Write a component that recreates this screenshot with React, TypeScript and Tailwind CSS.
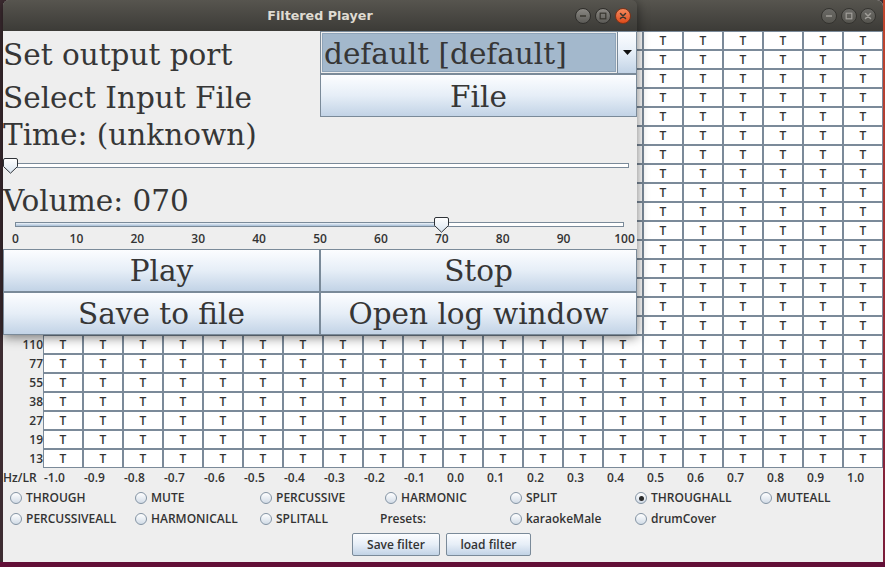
import React from 'react';

const SERIF = "font-['DejaVu_Serif',serif] text-[29.5px] leading-[34px] text-[#363636]";
const SANS = "font-['Open_Sans',sans-serif] font-semibold text-[12px] text-[#333333]";
const BTN = 'bg-linear-to-b from-[#fcfdff] via-[#e6eef7] to-[#c2d3e6] border border-[#7a8a99]';

// row labels of the filter grid, top to bottom
const HZ = [28160, 19912, 14080, 9956, 7040, 4978, 3520, 2489, 1760, 1244, 880, 622, 440, 311, 220, 155, 110, 77, 55, 38, 27, 19, 13];
const LR = Array.from({ length: 21 }, (_, i) => (i - 10) / 10);

// the player window covers the first 16 rows and 15 columns of the grid
const HIDDEN_ROWS = 16;
const HIDDEN_COLS = 15;

type Opt = { label: string; radio: boolean; checked?: boolean } | null;

const OPTIONS: Opt[][] = [
  [
    { label: 'THROUGH', radio: true },
    { label: 'MUTE', radio: true },
    { label: 'PERCUSSIVE', radio: true },
    { label: 'HARMONIC', radio: true },
    { label: 'SPLIT', radio: true },
    { label: 'THROUGHALL', radio: true, checked: true },
    { label: 'MUTEALL', radio: true },
  ],
  [
    { label: 'PERCUSSIVEALL', radio: true },
    { label: 'HARMONICALL', radio: true },
    { label: 'SPLITALL', radio: true },
    { label: 'Presets:', radio: false },
    { label: 'karaokeMale', radio: true },
    { label: 'drumCover', radio: true },
    null,
  ],
];

function WinButton({ kind, active }: { kind: 'min' | 'max' | 'close'; active: boolean }) {
  const face = active
    ? kind === 'close'
      ? 'bg-linear-to-b from-[#f6895c] to-[#dc4a17] border-[#7d3218]'
      : 'bg-linear-to-b from-[#8b8984] to-[#5b5a56] border-[#2f2e2b]'
    : 'bg-linear-to-b from-[#6b6a66] to-[#56554f] border-[#34332f]';
  const stroke = active ? '#38362f' : '#a09e99';
  return (
    <div className={`w-[16px] h-[16px] rounded-full border flex items-center justify-center ${face}`}>
      <svg width="8" height="8" viewBox="0 0 8 8">
        {kind === 'min' && <line x1="1" y1="4" x2="7" y2="4" stroke={stroke} strokeWidth="1.4" />}
        {kind === 'max' && <rect x="1.2" y="1.2" width="5.6" height="5.6" fill="none" stroke={stroke} strokeWidth="1.2" />}
        {kind === 'close' && (
          <path d="M1.5 1.5 L6.5 6.5 M6.5 1.5 L1.5 6.5" stroke={stroke} strokeWidth="1.5" strokeLinecap="round" />
        )}
      </svg>
    </div>
  );
}

function TitleBar({ title, active }: { title?: string; active: boolean }) {
  return (
    <div className="h-[31px] shrink-0 grid grid-cols-[1fr_auto_1fr] items-center bg-linear-to-b from-[#57554f] to-[#3c3b37]">
      <div />
      <span className="font-['DejaVu_Sans',sans-serif] font-bold text-[12.7px] text-[#dfdbd2]">{title}</span>
      <div className={`flex justify-end items-center ${active ? 'gap-[4px] pr-[6px]' : 'gap-[3.5px] pr-[7px]'}`}>
        <WinButton kind="min" active={active} />
        <WinButton kind="max" active={active} />
        <WinButton kind="close" active={active} />
      </div>
    </div>
  );
}

function Thumb({ className }: { className: string }) {
  return (
    <svg className={className} width="15" height="16" viewBox="0 0 15 16">
      <defs>
        <linearGradient id="thumbFill" x1="0" y1="0" x2="0" y2="1">
          <stop offset="0" stopColor="#ffffff" />
          <stop offset="1" stopColor="#d9e4ef" />
        </linearGradient>
      </defs>
      <path
        d="M2 0.5 H13 Q14.5 0.5 14.5 2 V8.5 L7.5 15.2 L0.5 8.5 V2 Q0.5 0.5 2 0.5 Z"
        fill="url(#thumbFill)"
        stroke="#2f3338"
        strokeWidth="1"
      />
    </svg>
  );
}

function Radio({ checked }: { checked?: boolean }) {
  return (
    <span className="ml-[5px] w-[12px] h-[12px] shrink-0 rounded-full border border-[#8494a4] bg-linear-to-b from-white to-[#d2dce7] flex items-center justify-center">
      {checked && <span className="w-[5px] h-[5px] rounded-full bg-[#2a2a2a]" />}
    </span>
  );
}

function FilterWindow() {
  return (
    <div className="w-[880px] h-[562px] flex flex-col bg-[#eeeeee] rounded-t-[6px] overflow-hidden">
      <TitleBar active={false} />

      <div className="flex flex-col">
        {HZ.map((hz, r) => (
          <div key={hz} className="flex h-[19px]">
            <div className={`w-[40px] text-right leading-[19px] ${SANS}`}>{r >= HIDDEN_ROWS ? hz : ''}</div>
            {LR.map((lr, c) => (
              <div
                key={lr}
                className={`w-[40px] h-[19px] border border-[#7b8a99] bg-white flex items-center justify-center ${SANS} font-normal`}
              >
                {r >= HIDDEN_ROWS || c >= HIDDEN_COLS ? 'T' : ''}
              </div>
            ))}
          </div>
        ))}
      </div>

      <div className={`flex h-[20px] items-center ${SANS}`}>
        <div className="w-[40px]">Hz/LR</div>
        {LR.map((lr) => (
          <div key={lr} className="w-[40px] pl-[1px] whitespace-pre">
            {lr < 0 ? lr.toFixed(1) : ' ' + lr.toFixed(1)}
          </div>
        ))}
      </div>

      {OPTIONS.map((row, r) => (
        <div key={r} className={`grid grid-cols-[repeat(7,125px)] pl-[2px] items-center ${r === 0 ? 'h-[20px]' : 'h-[21px]'} ${SANS}`}>
          {row.map((opt, i) =>
            opt ? (
              <div key={i} className="flex items-center gap-[4px]">
                {opt.radio && <Radio checked={opt.checked} />}
                <span>{opt.label}</span>
              </div>
            ) : (
              <div key={i} />
            ),
          )}
        </div>
      ))}

      <div className={`flex justify-center gap-[6px] pt-[4px] pr-[3px] ${SANS}`}>
        <button className={`w-[88px] h-[23px] rounded-[2px] ${BTN}`}>Save filter</button>
        <button className={`w-[85px] h-[23px] rounded-[2px] ${BTN}`}>load filter</button>
      </div>
    </div>
  );
}

function PlayerWindow() {
  const ticks = Array.from({ length: 11 }, (_, i) => i * 10);
  return (
    <div className="absolute left-[3px] top-0 w-[634px] h-[335px] flex flex-col rounded-t-[6px] overflow-hidden shadow-[0_2px_12px_rgba(0,0,0,0.55)]">
      <TitleBar title="Filtered Player" active />
      <div className="flex-1 flex flex-col bg-[#eeeeee]">
        <div className="flex h-[43px]">
          <div className={`w-[317px] pt-[7px] ${SERIF}`}>Set output port</div>
          <div className="w-[317px] flex border border-[#7a8a99]">
            <div className={`flex-1 m-[1px] bg-[#a3b8cc] border border-[#8ea4b9] pl-[1px] pt-[3px] ${SERIF} text-[#333a44]`}>
              default [default]
            </div>
            <div className={`w-[19px] flex items-center justify-center border-0 border-l ${BTN}`}>
              <svg width="9" height="5" viewBox="0 0 9 5">
                <path d="M0 0 H9 L4.5 5 Z" fill="#111111" />
              </svg>
            </div>
          </div>
        </div>

        <div className="flex h-[43px]">
          <div className={`w-[317px] pt-[7px] ${SERIF}`}>Select Input File</div>
          <button className={`w-[317px] pt-[2px] ${BTN} ${SERIF}`}>File</button>
        </div>

        <div className={`h-[38px] pt-[1px] ${SERIF}`}>Time: (unknown)</div>

        <div className="relative h-[27px]">
          <div className="ml-[1px] mt-[8px] w-[625px] h-[5px] border border-[#7a8a99] bg-white" />
          <Thumb className="absolute left-0 top-[3px]" />
        </div>

        <div className={`h-[34px] pt-[2px] ${SERIF}`}>Volume: 070</div>

        <div className="relative h-[17px]">
          <div className="ml-[12px] mt-[6px] w-[609px] h-[5px] flex border border-[#7a8a99] bg-white">
            <div className="w-[426px] bg-linear-to-b from-[#eef4fa] to-[#a7bed6]" />
          </div>
          <Thumb className="absolute left-[431px] top-[1px]" />
        </div>

        <div className={`relative h-[16px] ${SANS}`}>
          {ticks.map((t, i) => (
            <span
              key={t}
              className="absolute top-0 leading-[12px] -translate-x-1/2"
              style={{ left: 12.5 + i * 60.9 }}
            >
              {t}
            </span>
          ))}
        </div>

        <div className="grid grid-cols-2 grid-rows-2 flex-1">
          {['Play', 'Stop', 'Save to file', 'Open log window'].map((label) => (
            <button key={label} className={`${BTN} ${SERIF}`}>
              {label}
            </button>
          ))}
        </div>
      </div>
    </div>
  );
}

export default function App() {
  return (
    <div className="relative w-[885px] h-[567px] overflow-hidden flex flex-col bg-[#3d2c31]">
      <div className="flex h-[562px]">
        <div className="w-[3px] bg-[#3d2c31]" />
        <FilterWindow />
        <div className="w-[2px] bg-linear-to-b from-[#c2462c] to-[#7a1c3a]" />
      </div>
      <div className="h-[5px] bg-[#620f37]" />
      <PlayerWindow />
    </div>
  );
}
